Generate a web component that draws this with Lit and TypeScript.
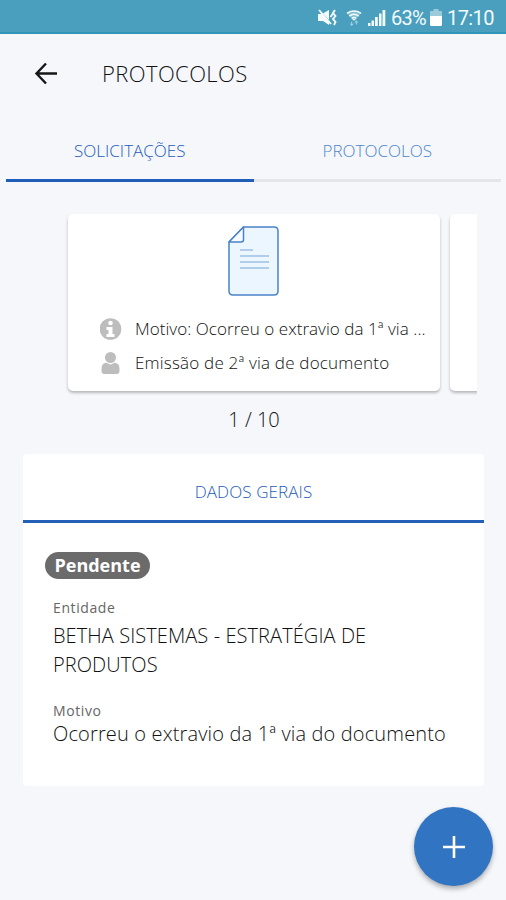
import { LitElement, html, css } from "lit";
import { customElement, property } from "lit/decorators.js";

@customElement("status-bar")
class StatusBar extends LitElement {
  static styles = css`
    :host { display: flex; align-items: center; height: 34px; box-sizing: border-box; padding: 4px 12px 0 0; justify-content: flex-end; background: #499fbd; border-bottom: 2px solid #2f96b8; color: #f4fbfd; font: 400 20px/32px Roboto, sans-serif; }
    svg { display: block; flex: none; margin-bottom: 1px; }
    .mute { margin-right: 9px; }
    .wifi { margin-right: 6px; }
    .signal { margin-right: 5px; }
    .percent { width: 35px; letter-spacing: -0.7px; white-space: nowrap; }
    .battery { margin-right: 5px; margin-left: 4px; }
    .time { width: 47px; letter-spacing: -0.6px; white-space: nowrap; }
  `;
  render() {
    return html`
      <svg class="mute" width="19" height="17" viewBox="0 0 19 17"><path d="M0 5h4l7-4v15l-6-4H0z" fill="#f4fbfd"/><path d="M0 0l14 15" stroke="#499fbd" stroke-width="1.2"/><path d="M1 1l12 14M12.500 8l2.500-3.500M17 1l-2 3 2.500 3-2.500 3 2.500 3-1.500 3" fill="none" stroke="#f4fbfd" stroke-width="1.900"/></svg>
      <svg class="wifi" width="16" height="18" viewBox="0 0 17 18"><path d="M1 4Q8.500-1 16 4L8.500 12z" fill="#f4fbfd" fill-opacity=".35"/><path d="M1 4Q8.500-1 16 4M3.500 7Q8.500 3 13.500 7M6 9.500Q8.500 7.500 11 9.500" fill="none" stroke="#f4fbfd" stroke-width="1.600"/><path d="M8.500 12l-2-2h4z" fill="#f4fbfd"/><path d="M6 13v4M11 12v4M4.500 15L6 17l1.500-2M9.500 14L11 12l1.500 2" fill="none" stroke="#a9d6e4" stroke-width="1"/></svg>
      <svg class="signal" width="18" height="18" viewBox="0 0 18 18" fill="#f4fbfd"><path d="M0 14h2.500v3H0zM3.500 11.500H6V17H3.500zM7 8h2.800v9H7zM11 4.500h2.500V17H11zM14.500 1h2.800v16h-2.800z"/></svg>
      <span class="percent">63%</span>
      <svg class="battery" width="12" height="17" viewBox="0 0 12 17"><path d="M3.500 0h5v2H12v5H0V2h3.500z" fill="#9bcbdb"/><path d="M0 7h12v8.500q0 1.500-1.500 1.500h-9Q0 17 0 15.500z" fill="#fff"/></svg>
      <span class="time">17:10</span>`;
  }
}

@customElement("request-card")
class RequestCard extends LitElement {
  @property() reason = "";
  @property() subject = "";
  static styles = css`
    :host { display: block; flex: none; width: 372px; height: 177px; box-sizing: border-box; background: #fff; border-radius: 5px; box-shadow: 0 2px 3px rgba(0,0,0,.26); }
    .doc { display: block; margin: 0 auto; padding: 11px 2px 0 0; }
    .line { display: flex; align-items: center; height: 34px; padding-left: 32px; color: #111; font-size: 17px; line-height: 24px; white-space: nowrap; }
    .lines { padding-top: 15px; }
    .line svg { flex: none; margin-right: 13px; }
    .reason { letter-spacing: .05px; }
    .subject { letter-spacing: .2px; }
  `;
  render() {
    if (!this.reason) return html``;
    return html`
      <svg class="doc" width="52" height="72" viewBox="0 0 52 72"><path d="M16.500 2H47q4 0 4 4v60q0 4-4 4H6q-4 0-4-4V17z" fill="#ecf6fe" stroke="#4b83c6" stroke-width="1.500"/><path d="M2 17L16.500 2v12.500q0 2.500-2.500 2.500z" fill="#f5fbff" stroke="#4b83c6" stroke-width="1.500" stroke-linejoin="round"/><path d="M13 25h13M13 31h29M13 37h29M13 43h29" stroke="#9fbfe5" stroke-width="1.500"/></svg>
      <div class="lines">
        <div class="line"><svg width="22" height="22" viewBox="0 0 22 22"><circle cx="10.500" cy="11" r="10.800" fill="#bdbdbd"/><circle cx="10.500" cy="5" r="2.300" fill="#fff"/><path d="M6.500 9h6v7h2v3h-8v-3h2v-4h-2z" fill="#fff"/></svg><span class="reason">${this.reason}</span></div>
        <div class="line"><svg width="22" height="22" viewBox="0 0 22 22" fill="#bdbdbd"><circle cx="10.500" cy="5.500" r="5.500"/><path d="M5 11q1.500-.5 2.500.3 3 2.200 6 0 1-.8 2.500-.3 3.500 1 3.500 6v2q0 3-3 3h-12Q1.500 22 1.500 19v-2q0-5 3.500-6z"/></svg><span class="subject">${this.subject}</span></div>
      </div>`;
  }
}

@customElement("app-root")
class AppRoot extends LitElement {
  static styles = css`
    :host { display: flex; flex-direction: column; position: relative; height: 900px; overflow: hidden; background: #f5f7fb; color: #111; font-family: "Open Sans", sans-serif; font-weight: 300; }
    .header { display: flex; align-items: center; height: 80px; padding-left: 34px; flex: none; }
    .title { margin-left: 44px; margin-top: -2px; font-size: 22px; letter-spacing: .4px; line-height: 30px; }
    .tabs { display: flex; flex: none; height: 68px; margin: 0 5px 0 6px; }
    .tab { flex: 1; text-align: center; font-size: 17px; line-height: 73px; height: 65px; color: #1d5bbd; border-bottom: 3px solid #e4e6e9; }
    .tab.active { border-bottom-color: #1f5fb9; }
    .tab:not(.active) { color: #4d86cf; }
    .slides { display: flex; align-items: flex-start; flex: none; gap: 10px; height: 191px; box-sizing: border-box; margin: 24px 29px 0 60px; padding: 8px 0 0 8px; overflow: hidden; }
    .pager { flex: none; height: 32px; margin-top: 7px; line-height: 32px; font-size: 20px; text-align: center; padding-left: 2px; }
    .panel { flex: none; margin: 18px 22px 0 23px; height: 332px; background: #fff; border-radius: 4px; }
    .panel-title { height: 66px; line-height: 75px; text-align: center; font-size: 17px; letter-spacing: .1px; color: #1d5bbd; border-bottom: 3px solid #2461b6; }
    .body { padding: 29px 22px 0; }
    .badge { display: block; width: 105px; height: 27px; border-radius: 14px; background: #6b6b6b; color: #fff; font-weight: 700; font-size: 18px; line-height: 26px; text-align: center; }
    .field { margin-left: 8px; }
    .label { font-size: 14px; line-height: 20px; color: #666; font-weight: 400; letter-spacing: .6px; }
    .value { font-size: 20px; line-height: 29px; white-space: pre-line; letter-spacing: .08px; }
    .entity { margin-top: 19px; }
    .entity .value { padding-top: 3px; }
    .motive { margin-top: 22px; }
    .motive .value { line-height: 25px; letter-spacing: .15px; }
    .fab { position: absolute; right: 13px; bottom: 14px; display: flex; align-items: center; justify-content: center; width: 79px; height: 79px; border: 0; padding: 0; border-radius: 50%; background: #3174c2; box-shadow: 0 3px 5px rgba(0,0,0,.3); }
  `;
  render() {
    return html`
      <status-bar></status-bar>
      <header class="header">
        <svg width="24" height="24" viewBox="0 0 24 24" fill="none" stroke="#171717" stroke-width="2.400"><path d="M23 11.500H2.500M12 1.500L2.500 11.500 12 21.500"/></svg>
        <span class="title">PROTOCOLOS</span>
      </header>
      <nav class="tabs"><div class="tab active">SOLICITAÇÕES</div><div class="tab">PROTOCOLOS</div></nav>
      <div class="slides">
        <request-card reason="Motivo: Ocorreu o extravio da 1ª via ..." subject="Emissão de 2ª via de documento"></request-card>
        <request-card></request-card>
      </div>
      <div class="pager">1 / 10</div>
      <section class="panel">
        <div class="panel-title">DADOS GERAIS</div>
        <div class="body">
          <span class="badge">Pendente</span>
          <div class="field entity"><div class="label">Entidade</div><div class="value">BETHA SISTEMAS - ESTRATÉGIA DE
PRODUTOS</div></div>
          <div class="field motive"><div class="label">Motivo</div><div class="value">Ocorreu o extravio da 1ª via do documento</div></div>
        </div>
      </section>
      <button class="fab" aria-label="Adicionar"><svg width="22" height="22" viewBox="0 0 22 22" stroke="#fff" stroke-width="2.600"><path d="M11 0v22M0 11h22"/></svg></button>`;
  }
}
